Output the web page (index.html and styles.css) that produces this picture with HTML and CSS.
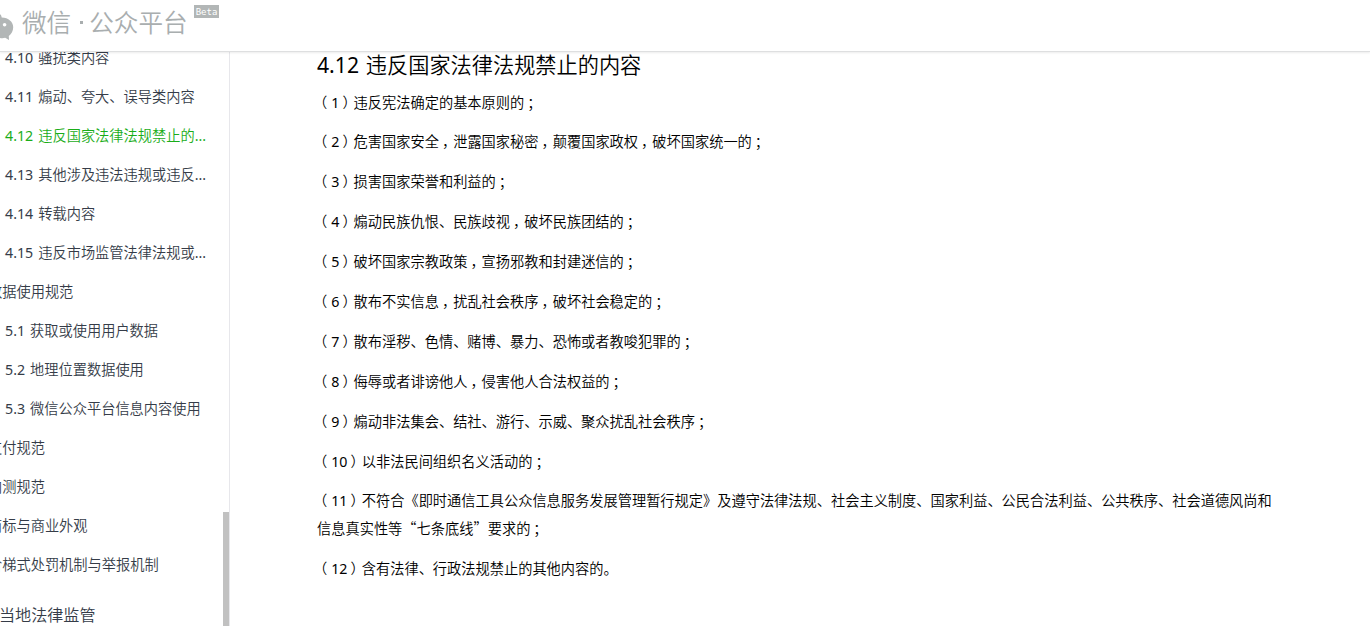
FILE: index.html
```html
<!DOCTYPE html>
<html lang="zh-CN">
<head>
<meta charset="utf-8">
<title>微信公众平台</title>
<link rel="stylesheet" href="styles.css">
</head>
<body>
<header class="header">
  <svg class="logo-mark" width="14" height="42" viewBox="0 0 14 42"><path d="M0 14.3 C1 15 1.5 16 1.7 17.6 C8.5 17.8 13.2 22 13.2 27.3 C13.2 30.8 11.5 34 8.8 36 L9 40 L5.2 37.8 C3.4 38.4 1.5 38.3 0 38 Z" fill="#b2b6b6"/><circle cx="4.6" cy="24.7" r="1.8" fill="#fff"/></svg>
  <div class="logo-text">微信<span class="dot"></span>公众平台</div>
  <span class="beta">Beta</span>
</header>
<div class="body">
  <nav class="side">
    <ul class="menu">
      <li class="item"><span class="n">4.10 </span>骚扰类内容</li>
      <li class="item"><span class="n">4.11 </span>煽动、夸大、误导类内容</li>
      <li class="item active"><span class="n">4.12 </span>违反国家法律法规禁止的<span class="n">...</span></li>
      <li class="item"><span class="n">4.13 </span>其他涉及违法违规或违反<span class="n">...</span></li>
      <li class="item"><span class="n">4.14 </span>转载内容</li>
      <li class="item"><span class="n">4.15 </span>违反市场监管法律法规或<span class="n">...</span></li>
      <li class="item group">数据使用规范</li>
      <li class="item"><span class="n">5.1 </span>获取或使用用户数据</li>
      <li class="item"><span class="n">5.2 </span>地理位置数据使用</li>
      <li class="item"><span class="n">5.3 </span>微信公众平台信息内容使用</li>
      <li class="item group">支付规范</li>
      <li class="item group">内测规范</li>
      <li class="item group">商标与商业外观</li>
      <li class="item group">阶梯式处罚机制与举报机制</li>
      <li class="item chapter">当地法律监管</li>
    </ul>
    <div class="scroll"></div>
  </nav>
  <main class="main">
    <h2 class="title"><span class="n">4.12 </span>违反国家法律法规禁止的内容</h2>
    <p><span class="lp">（</span><span class="n">1</span><span class="rp">）</span>违反宪法确定的基本原则的<span class="c">；</span></p>
    <p><span class="lp">（</span><span class="n">2</span><span class="rp">）</span>危害国家安全<span class="c">，</span>泄露国家秘密<span class="c">，</span>颠覆国家政权<span class="c">，</span>破坏国家统一的<span class="c">；</span></p>
    <p><span class="lp">（</span><span class="n">3</span><span class="rp">）</span>损害国家荣誉和利益的<span class="c">；</span></p>
    <p><span class="lp">（</span><span class="n">4</span><span class="rp">）</span>煽动民族仇恨、民族歧视<span class="c">，</span>破坏民族团结的<span class="c">；</span></p>
    <p><span class="lp">（</span><span class="n">5</span><span class="rp">）</span>破坏国家宗教政策<span class="c">，</span>宣扬邪教和封建迷信的<span class="c">；</span></p>
    <p><span class="lp">（</span><span class="n">6</span><span class="rp">）</span>散布不实信息<span class="c">，</span>扰乱社会秩序<span class="c">，</span>破坏社会稳定的<span class="c">；</span></p>
    <p><span class="lp">（</span><span class="n">7</span><span class="rp">）</span>散布淫秽、色情、赌博、暴力、恐怖或者教唆犯罪的<span class="c">；</span></p>
    <p><span class="lp">（</span><span class="n">8</span><span class="rp">）</span>侮辱或者诽谤他人<span class="c">，</span>侵害他人合法权益的<span class="c">；</span></p>
    <p><span class="lp">（</span><span class="n">9</span><span class="rp">）</span>煽动非法集会、结社、游行、示威、聚众扰乱社会秩序<span class="c">；</span></p>
    <p><span class="lp">（</span><span class="n">10</span><span class="rp">）</span>以非法民间组织名义活动的<span class="c">；</span></p>
    <p><span class="lp">（</span><span class="n">11</span><span class="rp">）</span>不符合《即时通信工具公众信息服务发展管理暂行规定》及遵守法律法规、社会主义制度、国家利益、公民合法利益、公共秩序、社会道德风尚和<br>信息真实性等<span class="q">“</span>七条底线<span class="q">”</span>要求的<span class="c">；</span></p>
    <p><span class="lp">（</span><span class="n">12</span><span class="rp">）</span>含有法律、行政法规禁止的其他内容的。</p>
  </main>
</div>
</body>
</html>
```
FILE: styles.css
```css
* { box-sizing: border-box; }
html, body { height: 100%; }
body {
  margin: 0;
  background: #fff;
  color: #000;
  font: 350 14.22px "Noto Sans", "Noto Sans CJK SC", sans-serif;
  word-spacing: 1.3px;
  display: flex;
  flex-direction: column;
  overflow: hidden;
}
.n { font-weight: 400; }
.header {
  flex: none;
  height: 52px;
  display: flex;
  align-items: flex-start;
  border-bottom: 1px solid #dedfe0;
  box-shadow: 0 1px 2px rgba(0, 0, 0, .08);
  background: #fff;
  z-index: 1;
}
.logo-mark { display: block; flex: none; }
.logo-text {
  margin-left: 8px;
  width: 172px;
  line-height: 43px;
  font-family: "Noto Sans CJK SC", sans-serif;
  font-size: 24.6px;
  font-weight: 350;
  color: #a9aeaf;
  white-space: nowrap;
}
.dot {
  display: inline-block;
  width: 3px;
  height: 3px;
  margin: 0 6px 8px 9px;
  background: #a9aeaf;
  vertical-align: baseline;
}
.beta {
  margin-top: 5px;
  width: 25px;
  height: 13px;
  background: #b2b6b6;
  color: #fff;
  font: 9px/14px "DejaVu Sans Mono", monospace;
  text-align: center;
}
.body { flex: 1; min-height: 0; display: flex; }
.side {
  flex: none;
  width: 230px;
  border-right: 1px solid #e7e7eb;
  display: flex;
  justify-content: space-between;
  overflow: hidden;
}
.menu {
  list-style: none;
  margin: -14px 0 0;
  padding: 0;
  width: 222px;
  color: #353c48;
  white-space: nowrap;
}
.item { height: 39px; line-height: 39px; padding-left: 5px; }
.active { color: #1aad19; }
.group { padding: 0; margin-left: -12px; }
.chapter { padding: 0; margin-left: -1px; height: 62px; line-height: 62px; font-size: 16.1px; }
.scroll { width: 6px; height: 114px; background: #c1c1c1; align-self: flex-end; }
.main { padding-left: 87px; white-space: nowrap; }
.title { margin: -1px 0 0; font-size: 21.2px; font-weight: 350; line-height: 28px; }
.main p { margin: 0 0 11.9px; line-height: 28px; }
.main .title + p { margin-top: 9.5px; }
.lp, .rp, .q { font-family: "Noto Sans CJK SC", sans-serif; line-height: 0; }
.lp { margin: 0 4px 0 -4px; }
.rp { padding-left: 3px; letter-spacing: -3px; }
.c { padding-left: 3px; letter-spacing: -3px; }
```
